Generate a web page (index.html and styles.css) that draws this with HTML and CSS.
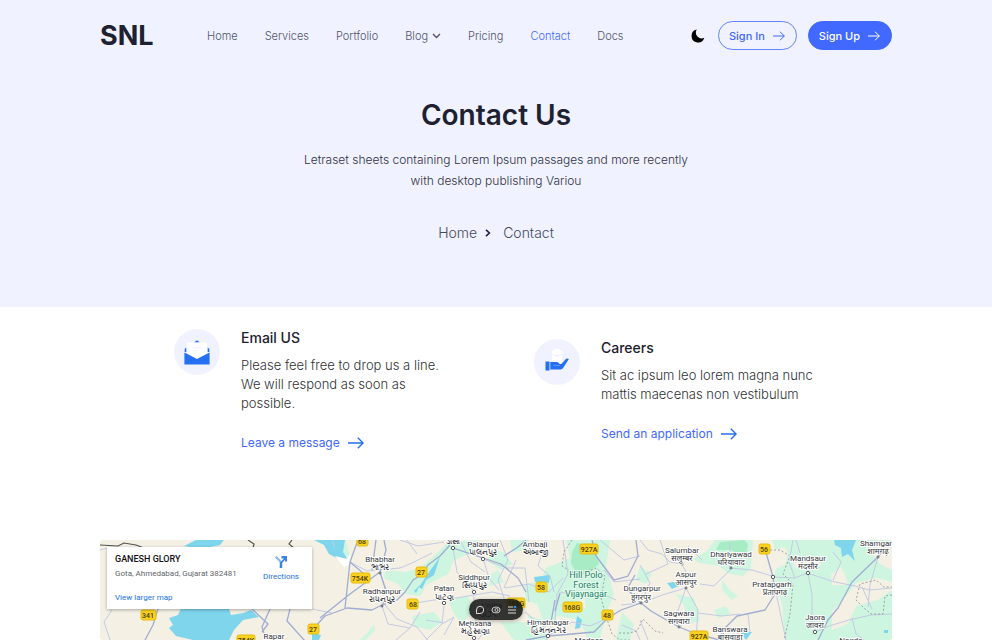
FILE: index.html
```html
<!DOCTYPE html>
<html lang="en">
<head>
<meta charset="utf-8">
<meta name="viewport" content="width=device-width, initial-scale=1">
<title>Contact Us - SNL</title>
<link rel="stylesheet" href="styles.css">
</head>
<body>
<div class="hero">
  <header class="topbar wrap">
    <a class="brand" href="#">SNL</a>
    <nav class="nav" aria-label="Main">
      <a href="#">Home</a>
      <a href="#">Services</a>
      <a href="#">Portfolio</a>
      <button class="nav-drop" type="button">Blog
        <svg width="9" height="6" viewBox="0 0 9 6" aria-hidden="true"><path d="M1 1l3.500 3.500L8 1" fill="none" stroke="currentColor" stroke-width="1.400"/></svg>
      </button>
      <a href="#">Pricing</a>
      <a class="active" href="#">Contact</a>
      <a href="#">Docs</a>
    </nav>
    <div class="actions">
      <button class="theme" type="button" aria-label="Dark mode">
        <svg width="14" height="14" viewBox="0 0 14 14" aria-hidden="true"><path d="M5.800 .6A6.500 6.500 0 1 0 13.300 8.800A5.800 5.800 0 0 1 5.800 .6z"/></svg>
      </button>
      <a class="btn" href="#">Sign In
        <svg width="12" height="10" viewBox="0 0 12 10" aria-hidden="true"><path d="M0 5h11.300M7 .7L11.300 5L7 9.300" fill="none" stroke="currentColor"/></svg>
      </a>
      <a class="btn btn-solid" href="#">Sign Up
        <svg width="12" height="10" viewBox="0 0 12 10" aria-hidden="true"><path d="M0 5h11.300M7 .7L11.300 5L7 9.300" fill="none" stroke="currentColor"/></svg>
      </a>
    </div>
  </header>
  <div class="intro">
    <h1>Contact Us</h1>
    <p>Letraset sheets containing Lorem Ipsum passages and more recently with desktop publishing Variou</p>
    <nav class="crumbs" aria-label="Breadcrumb">
      <a href="#">Home</a>
      <svg width="6" height="8" viewBox="0 0 6 8" aria-hidden="true"><path d="M1 .8L4.400 4L1 7.200" fill="none" stroke="#1d2144" stroke-width="1.600"/></svg>
      <a class="current" href="#">Contact</a>
    </nav>
  </div>
</div>

<main>
  <section class="features">
    <article class="feature">
      <span class="disc">
        <svg width="26" height="26" viewBox="0 0 26 26" aria-hidden="true">
          <path d="M10.500 3.500Q13-.5 15.500 3.500zM.7 10l1.600-1.500V13H.7zM25.300 10l-1.600-1.500V13h1.600z" fill="#256ff2"/>
          <path d="M3 3.500h20v11L13 20L3 14.500z" fill="#fff"/>
          <path d="M.4 13.500L13 20l12.600-6.500V25.500H.4z" fill="#256ff2"/>
          <path d="M8.500 8.800h10M8.500 11.800h5" stroke="#edf1ff" stroke-width="1"/>
        </svg>
      </span>
      <div class="copy">
        <h2>Email US</h2>
        <p>Please feel free to drop us a line. We will respond as soon as possible.</p>
        <a class="more" href="#">Leave a message
          <svg width="16" height="12" viewBox="0 0 16 12" aria-hidden="true"><path d="M0 6h15M9.800 .7L15.100 6L9.800 11.300" fill="none" stroke="currentColor" stroke-width="1.400"/></svg>
        </a>
      </div>
    </article>
    <article class="feature">
      <span class="disc">
        <svg width="26" height="26" viewBox="0 0 26 26" aria-hidden="true">
          <path d="M8 1.500h2V0h6v1.500h2v12.500H8z" fill="#fff"/>
          <path d="M8 5l5 2l5-2" fill="none" stroke="#f0f2ff"/>
          <circle cx="13" cy="6.700" r="1.300" fill="#f0f2ff"/>
          <path d="M1.500 12.500h4v9h-4zM6.300 12.900h6.500c1.500 0 2 1 2.600 2h2l4-4.500c1-1.200 2.500-1.300 3.500-.4l-5.500 8.500c-1 1.500-2 2-4 2H6.300z" fill="#256ff2"/>
          <path d="M9.500 16.500h6.500" stroke="#75a2f9" stroke-width=".7"/>
        </svg>
      </span>
      <div class="copy">
        <h2>Careers</h2>
        <p>Sit ac ipsum leo lorem magna nunc mattis maecenas non vestibulum</p>
        <a class="more" href="#">Send an application
          <svg width="16" height="12" viewBox="0 0 16 12" aria-hidden="true"><path d="M0 6h15M9.800 .7L15.100 6L9.800 11.300" fill="none" stroke="currentColor" stroke-width="1.400"/></svg>
        </a>
      </div>
    </article>
  </section>

  <section class="map wrap" aria-label="Map">
    <div class="map-frame">
      <svg class="map-art" viewBox="100 540 792 100" preserveAspectRatio="xMinYMin slice" aria-hidden="true">
        <rect x="100" y="540" width="792" height="100" fill="#f5f0e4"/>
        <g fill="#cef5e0">
          <path d="M386 570l20 2l14-4l18-16l10-10l32-2l-2 10l-24 10l-6 14l-20 10l-8 12l-14-2l-8-10l-14-6z"/>
          <path d="M336 540h10l4 18l-10-6zM374 624l-6 8l-8 8h6l9-10zM412 616l22-4l8 10l-12 8l-16-4zM448 600l20-4l6 14l-12 14l-8-10zM485 548l18 4l10 12l-12 6l-12-8zM510 540h18l2 10l-18 2zM488 576l10-6l6 12l-14 4zM524 584l16-2l6-14l24-10l-4-18h44l-4 26l8 28l-8 20l-6 26h-12l-8-20l-22-4l-14 12l-16-10z"/>
          <path d="M500 622h40l8 18h-34zM622 612l12 12l-4 16h-14zM693 559l14-8l8-11h38l-2 28l-8 8l-14-2l-10-8l-20-3zM676 594l18 4l6 22l-10 4l-6-18zM640 566l12 8l-6 10l-10-4zM714 610l12-4l4 8l-12 4zM722 580l8 10l8 6l-6 4l-10-10z"/>
          <path d="M772 540h120v100h-107l-3-35l-8-30l5-15z"/>
        </g>
        <g fill="#a7ecc4">
          <path d="M572 552l5-9l16 3l6 18l-10 8l-14-1l-4-8z"/>
          <path d="M716 550l4-8l24-2l4 4l-2 12l-16-6z"/>
        </g>
        <g fill="#f5f0e4">
          <path d="M774 550l10-3l4 5l-3 13l-8 3zM795 558l22 1l4 6l-12 4l-16-2zM831 575l10-8l4 8l3 10l-16 0zM832 612l14-16l10-13l20-5l16 4v8l-14 10l-22 6l-8 18l-16 6zM868 548l24-6v28l-12-6zM774 618l10 8l-6 14h-8z"/>
          <path d="M523 600l14 4l6 16l-14-4zM584 590l-6 14l8 5zM425 585l10 2l-2 6l-9-2z"/>
        </g>
        <g fill="#7ed5ec">
          <path d="M184 546l12-6h28l-4 5l-20 4zM169 618l9-3l4-9h46l3 9l12-2l8-3l8 7l-16 3l-9 10l-5 10h-36l-17-4l-7-8l4-3z"/>
          <path d="M314 540h31l-2 12l4 6l-5 3l-13-7l-5-9zM312 632l9 3l-2 5h-7zM534 577l16-2l-1 8l-14-1zM577 616l5 4l-2 8l-5 1zM440 557l-6 18l-8 5l-4 9l-3-2l8-12zM414 591l6-6l-4 8z"/>
          <path d="M834 540h22l-4 10l3 11l-7-7l-6 3l-1-9l-6-3zM667 583l7-1l5 4l-7 3zM740 632h12l-6 8zM884 630h4v3h-4z"/>
        </g>
        <path d="M335 556l12 3l3-5l1 10l-7 3z" fill="#fff"/>
        <g fill="none" stroke="#c3cae4" stroke-width="1">
          <path d="M350 562l17 9l33-3l12-5l20-10M400 540l18 6l26-4M407 540l10 14M380 573l7 20l-2 12l12 14l20 8l16 20M410 604l24-4l22-2l36-6l18 4M444 606l-2 18l-16 16M382 606l6 18l22 4M453 548l4 24l16 18l2 18M453 548l30 10l6 20l10 12M483 559l24 9l18 0l4 34M461 542l10 20l14 10M500 540l8 20l-10 20l8 24M505 588l24-4l20 8l14-14M516 560l-12 28M546 540l-8 26l12 10l4 16M563 540l5 34l-11 20l-2 26M426 620l18 3l10-6l-10 18M396 640l14-12l10-16M470 612l14 20l-6 8"/>
          <path d="M525 612l20 16l2 12M548 636l24-14l18 4l18-8M560 592l18 4l20-4l18 8M604 570l10 12l26-3M600 540l24 20l16-4M640 565l10 18l-9 20l-20 2M640 540l8 10l14 4l8 8l12 2l6 12l-2 12M660 540l8 24l-22 10M686 588l-10 28l3 11M686 588l12 22l-2 30M698 613l24 3l18-2M642 603l20-8l24-7M679 627l14-10M700 584l14 2l16-16l0-28M730 568l22 2l20 6M702 560l-14-14M748 614l2 18M648 640l-8-20M622 625l14 6l4 9M100 550l12-3l10 6M112 610l-8 12l6 18M332 540l3 8M312 609l20 4"/>
          <path d="M773 577l22 1l12-5l28 9l20 4l14 4l23-2M795 578l-6-16l4-22M808 573l4 22l0 26l3 10M815 632l14-6l20-6l22-5l21-1M852 618l4 16l8 6M833 580l8-18l-8-10M878 557l-8 28l-2 22M862 587l10 22M773 577l6 30l7 33M796 540l4 13"/>
        </g>
        <g fill="none" stroke="#a0acd2" stroke-width="1.300" stroke-linejoin="round">
          <path d="M376 540l-4 30M384 540l2 10l-6 22l7 22l-5 12M270 609l-8 18l4 13M290 609l-3 12l18 20M252 609l16 15l-6 8"/>
          <path d="M450 545l-10 11l-12 9l-5 9l-10 6l-8 12l-8 8l-15 5l-10 5l-25-2l-22 8l-13 14M358 540l-8 22l-5 46M320 618l30-24l30-22M350 562l14 12M158 609l-5 16l-8 15"/>
          <path d="M453 548l30 10l18 6l17 14l8 14M504 556l14-9l8-7M592 540l4 16l18 24l14-4l10-20l-2-16M641 603l-20 7l-13 8l-14 14l-22 2l-24 2l-22 4M555 600l-4 22l-3 14M560 593l-5 18M641 603l10 8l12 7l16 9l15 6l25 7M719 640l4-10l14-14l28-6l10-16l-2-17l-8-28M818 640l10-20l10-12l14-26l26-25l6-8M641 603l-14-14l8-14"/>
        </g>
        <g fill="none" stroke="#8a8f92" stroke-width=".8" stroke-dasharray="2 2">
          <path d="M572 540l-8 12l-2 14l10 6l10 2l14-6l9 8l-4 22l5 18l6 18l8 6h10M619 633h10l8-2l6-12l12 12l8 2"/>
          <path d="M770 550l10 0l10 6l-7 18l10 10l-3 30l-6 26M892 595l-7 1l-2 18l-12 0l-7-6l-8-8l4-16l16-4l8 7h16"/>
        </g>
        <g fill="none" stroke="#555" stroke-width="1.200"><path d="M100 545l18 1l6-3l12 2l8 3M248 540l6 4l-1 4M292 540l-3 4l5 4"/></g>
        <g class="marks"><circle cx="453" cy="548" r="1.700"/><circle cx="483" cy="559" r="1.700"/><circle cx="474" cy="592" r="1.700"/><circle cx="444" cy="603" r="1.700"/><circle cx="474" cy="638" r="1.700"/><circle cx="548" cy="636" r="1.700"/><circle cx="773" cy="577" r="1.700"/><circle cx="808" cy="573" r="1.700"/><circle cx="815" cy="632" r="1.700"/><circle cx="380" cy="573" r="1"/><circle cx="382" cy="606" r="1"/><circle cx="641" cy="603" r="1"/><circle cx="682" cy="564" r="1"/><circle cx="686" cy="588" r="1"/><circle cx="731" cy="568" r="1"/><circle cx="679" cy="627" r="1"/><circle cx="878" cy="557" r="1"/></g>
        <g class="places">
          <text x="380" y="562">Bhabhar</text><text x="380" y="570">ભાભર</text>
          <text x="382" y="594">Radhanpur</text><text x="382" y="602">રાધનપુર</text>
          <text x="444" y="591">Patan</text><text x="444" y="600">પાટણ</text>
          <text x="474" y="580">Siddhpur</text><text x="474" y="588">સિધ્ધપુર</text>
          <text x="453" y="544">ડીસા</text>
          <text x="483" y="547">Palanpur</text><text x="483" y="555">પાલનપુર</text>
          <text x="535" y="547">Ambaji</text><text x="535" y="555">અંબાજી</text>
          <text x="492" y="608">Unjha</text><text x="488" y="617">ઊંઝા</text>
          <text x="475" y="626">Mehsana</text><text x="475" y="634">મહેસાણા</text>
          <text x="548" y="625">Himatnagar</text><text x="548" y="633">હિંમતનગર</text>
          <text x="642" y="591">Dungarpur</text><text x="641" y="600">डूंगरपुर</text>
          <text x="682" y="553">Salumbar</text><text x="682" y="561">सलुम्बर</text>
          <text x="686" y="577">Aspur</text><text x="686" y="585">आसपुर</text>
          <text x="731" y="557">Dhariyawad</text><text x="731" y="565">धरियावाद</text>
          <text x="679" y="616">Sagwara</text><text x="679" y="624">सगवारा</text>
          <text x="730" y="632">Banswara</text><text x="730" y="640">बांसवाड़ा</text>
          <text x="772" y="587">Pratapgarh</text><text x="775" y="595">प्रतापगढ़</text>
          <text x="808" y="561">Mandsaur</text><text x="808" y="569">मंदसौर</text>
          <text x="815" y="620">Jaora</text><text x="815" y="628">जावरा</text>
          <text x="876" y="546">Shamgar</text><text x="878" y="554">शामगढ़</text>
          <text x="274" y="639">Rapar</text><text x="589" y="643">Modasa</text><text x="851" y="643">Nagda</text>
        </g>
        <g class="park"><text x="586" y="578">Hill Polo</text><text x="586" y="588">Forest</text><text x="586" y="597">Vijaynagar</text></g>
        <g class="shields">
          <rect x="141" y="610" width="15" height="10" rx="2"/><text x="148" y="618">341</text>
          <rect x="308" y="624" width="11" height="10" rx="2"/><text x="313" y="632">27</text>
          <rect x="237" y="635" width="18" height="10" rx="2"/><text x="246" y="643">754K</text>
          <rect x="357" y="537" width="11" height="9" rx="2"/><text x="362" y="544">68</text>
          <rect x="351" y="573" width="19" height="10" rx="2"/><text x="360" y="581">754K</text>
          <rect x="416" y="567" width="11" height="10" rx="2"/><text x="421" y="575">27</text>
          <rect x="407" y="599" width="11" height="10" rx="2"/><text x="413" y="607">68</text>
          <rect x="580" y="544" width="18" height="10" rx="2"/><text x="589" y="552">927A</text>
          <rect x="536" y="582" width="11" height="10" rx="2"/><text x="541" y="590">58</text>
          <rect x="563" y="602" width="19" height="10" rx="2"/><text x="572" y="610">168G</text>
          <rect x="602" y="610" width="11" height="10" rx="2"/><text x="607" y="618">48</text>
          <rect x="507" y="598" width="18" height="10" rx="2"/><text x="516" y="606">168G</text>
          <rect x="759" y="544" width="11" height="10" rx="2"/><text x="764" y="552">56</text>
          <rect x="690" y="631" width="18" height="10" rx="2"/><text x="699" y="639">927A</text>
        </g>
      </svg>
      <div class="place">
        <div class="place-info">
          <strong>GANESH GLORY</strong>
          <span>Gota, Ahmedabad, Gujarat 382481</span>
          <a href="#">View larger map</a>
        </div>
        <a class="directions" href="#">
          <svg width="14" height="14" viewBox="0 0 14 14" aria-hidden="true"><path d="M5.500 13V7L1 2.500L2.500 1L7 5.500V13z" fill="#8ab4f8"/><path d="M6 13V7.500L10 3.500H7.500V1H13V6.500H11V4.800L8.200 8v5z" fill="#3b82e8"/></svg>
          Directions
        </a>
      </div>
    </div>
  </section>
</main>

<div class="dock" role="toolbar" aria-label="Page tools">
  <button type="button" aria-label="Comment"><svg width="10" height="10" viewBox="0 0 10 10"><path d="M1.500 8.500V5A3.600 3.600 0 1 1 5 8.500z" fill="none" stroke="#ddd"/></svg></button>
  <button type="button" aria-label="Preview"><svg width="10" height="10" viewBox="0 0 10 10"><rect x="1" y="2.200" width="8" height="5.600" rx="2.800" fill="none" stroke="#ccc"/><circle cx="5.500" cy="5" r="1.500" fill="none" stroke="#ccc"/></svg></button>
  <button type="button" aria-label="Menu"><svg width="10" height="10" viewBox="0 0 10 10"><path d="M1 2h5M1 5h8M1 8h8" stroke="#ddd"/><circle cx="8" cy="2" r="1.300" fill="#2f8cff"/></svg></button>
</div>
</body>
</html>
```

FILE: styles.css
```css
* { box-sizing: border-box; }

body {
  margin: 0;
  min-height: 100vh;
  display: flex;
  flex-direction: column;
  background: #fff;
  color: #1d2130;
  font-family: Inter, "Liberation Sans", sans-serif;
}

a { color: inherit; text-decoration: none; }
button { padding: 0; border: 0; background: none; color: inherit; font: inherit; cursor: pointer; }
svg { display: block; flex: none; }
h1, h2, p { margin: 0; }

.wrap { padding: 0 100px; }

.hero { background: #f0f2ff; padding-bottom: 64px; }

.topbar { display: flex; align-items: center; height: 71px; }
.brand { width: 107px; font-size: 27px; font-weight: 700; line-height: 32px; }
.nav { display: flex; align-items: center; gap: 27px; color: #50556b; font-size: 11px; font-weight: 300; line-height: 16px; white-space: nowrap; }
.nav-drop { display: flex; align-items: center; gap: 4px; }
.nav .active { color: #4169ff; }
.actions { display: flex; align-items: center; gap: 11px; margin-left: auto; }
.theme { margin-right: 2px; }
.btn {
  display: flex;
  align-items: center;
  gap: 8px;
  height: 29px;
  padding: 0 11px 0 10px;
  border: 1px solid #6384ff;
  border-radius: 15px;
  color: #4169ff;
  font-size: 11px;
  font-weight: 500;
  white-space: nowrap;
}
.btn-solid { background: #4169ff; border-color: #4169ff; color: #fff; }

.intro { display: flex; flex-direction: column; align-items: center; padding-top: 26px; text-align: center; }
.intro h1 { font-size: 28px; font-weight: 600; line-height: 36px; }
.intro p { max-width: 400px; margin-top: 16px; color: #303340; font-size: 12px; font-weight: 300; line-height: 21px; }
.crumbs { display: flex; align-items: center; gap: 8px; margin-top: 32px; color: #454a5d; font-size: 14px; font-weight: 300; line-height: 20px; }
.crumbs .current { padding-left: 4px; }

main { flex: 1; display: flex; flex-direction: column; }

.features {
  display: grid;
  grid-template-columns: 284px 284px;
  justify-content: center;
  align-items: center;
  gap: 76px;
  padding: 22px 0 87px;
}
.feature { display: flex; align-items: flex-start; gap: 21px; }
.disc { display: flex; align-items: center; justify-content: center; flex: none; width: 46px; height: 46px; border-radius: 50%; background: #f0f2ff; }
.copy { flex: 1; min-width: 0; }
.copy h2 { font-size: 14px; font-weight: 500; line-height: 18px; }
.copy p { margin-top: 9px; color: #303236; font-size: 13px; font-weight: 300; line-height: 19px; }
.more { display: flex; align-items: center; gap: 8px; margin-top: 20px; color: #4169ff; font-size: 12px; line-height: 20px; }
.more svg { color: #256ff2; }

.map { flex: 1; display: flex; }
.map-frame { position: relative; flex: 1; min-height: 100px; overflow: hidden; border-radius: 3px; }
.map-art { position: absolute; width: 100%; height: 100%; font-family: Roboto, "Noto Sans", sans-serif; text-anchor: middle; }
.places { fill: #33373b; stroke: #fff; stroke-width: 2px; paint-order: stroke; font-size: 8px; }
.park { fill: #238066; stroke: #e6faef; stroke-width: 2px; paint-order: stroke; font-size: 9px; }
.shields { font-size: 7px; font-weight: 500; fill: #4b3c05; }
.shields rect { fill: #fbd21d; stroke: #e5ba13; stroke-width: 1px; }
.marks { fill: #fff; stroke: #555a60; stroke-width: 1px; }

.place {
  position: absolute;
  top: 7px;
  left: 7px;
  display: flex;
  justify-content: space-between;
  width: 205px;
  height: 62px;
  padding: 6px 13px 0 8px;
  background: #fff;
  box-shadow: 0 1px 3px rgba(0, 0, 0, .3);
  font-family: Roboto, sans-serif;
  font-size: 8px;
}
.place-info { display: flex; flex-direction: column; line-height: 12px; white-space: nowrap; }
.place-info strong { font-size: 9px; font-weight: 500; color: #111; line-height: 12px; }
.place-info span { margin-top: 3px; color: #62666b; }
.place a { color: #1a73e8; }
.place-info a { margin-top: 12px; }
.directions { display: flex; flex-direction: column; align-items: center; gap: 2px; padding-top: 2px; line-height: 12px; }

.dock {
  position: fixed;
  bottom: 20px;
  left: 50%;
  display: flex;
  align-items: center;
  justify-content: space-between;
  width: 54px;
  height: 21px;
  margin-left: -27px;
  padding: 0 6px;
  border-radius: 11px;
  background: rgba(24, 24, 24, .88);
  box-shadow: 0 1px 4px rgba(0, 0, 0, .3);
}
```
